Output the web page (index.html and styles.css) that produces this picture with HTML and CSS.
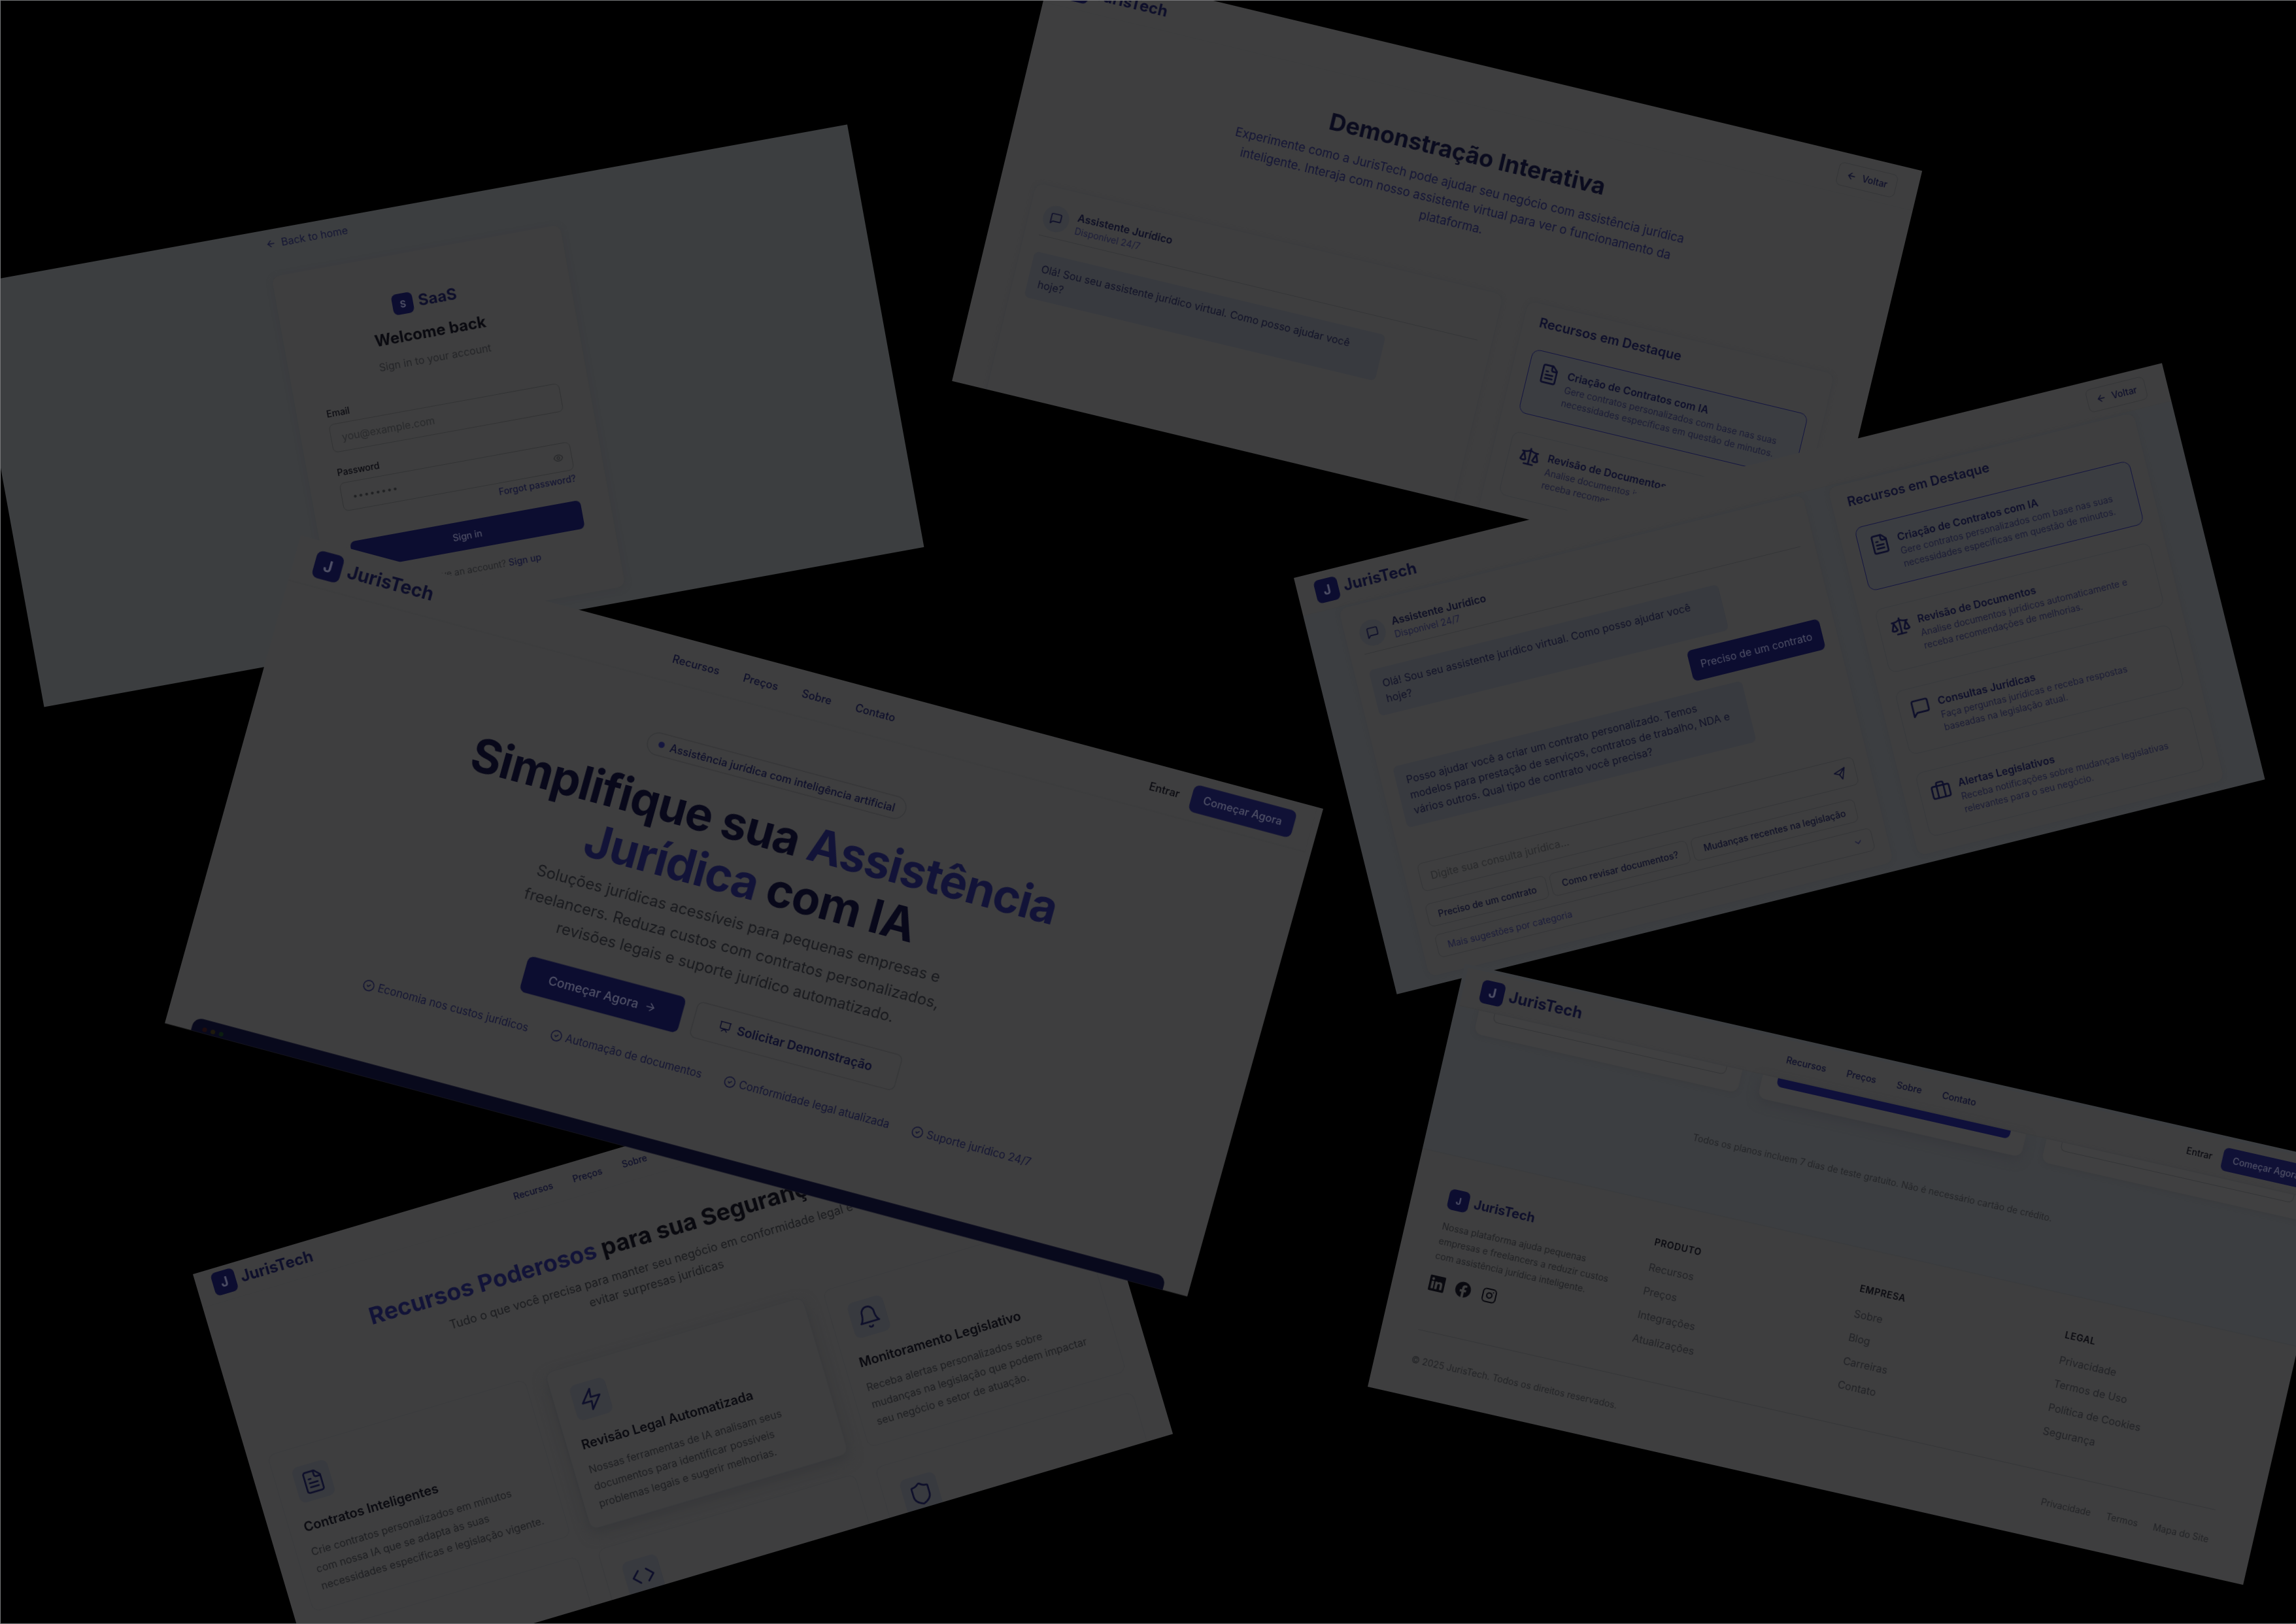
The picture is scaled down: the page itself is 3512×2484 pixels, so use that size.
FILE: index.html
```html
<!DOCTYPE html>
<html lang="pt-BR">
<head>
<meta charset="utf-8">
<title>JurisTech</title>
<link rel="stylesheet" href="styles.css">
</head>
<body>
<svg class="sprite" aria-hidden="true">
  <symbol id="file" viewBox="0 0 24 24"><path d="M15 2H6a2 2 0 0 0-2 2v16a2 2 0 0 0 2 2h12a2 2 0 0 0 2-2V7Z"/><path d="M14 2v4a2 2 0 0 0 2 2h4"/><path d="M10 9H8"/><path d="M16 13H8"/><path d="M16 17H8"/></symbol>
  <symbol id="scale" viewBox="0 0 24 24"><path d="m16 16 3-8 3 8c-.87.65-1.92 1-3 1s-2.13-.35-3-1Z"/><path d="m2 16 3-8 3 8c-.87.65-1.92 1-3 1s-2.13-.35-3-1Z"/><path d="M7 21h10"/><path d="M12 3v18"/><path d="M3 7h2c2 0 5-1 7-2 2 1 5 2 7 2h2"/></symbol>
  <symbol id="msg" viewBox="0 0 24 24"><path d="M21 15a2 2 0 0 1-2 2H7l-4 4V5a2 2 0 0 1 2-2h14a2 2 0 0 1 2 2z"/></symbol>
  <symbol id="case" viewBox="0 0 24 24"><rect x="2" y="7" width="20" height="14" rx="2"/><path d="M16 21V5a2 2 0 0 0-2-2h-4a2 2 0 0 0-2 2v16"/></symbol>
  <symbol id="zap" viewBox="0 0 24 24"><path d="M13 2 3 14h9l-1 8 10-12h-9l1-8z"/></symbol>
  <symbol id="bell" viewBox="0 0 24 24"><path d="M6 8a6 6 0 0 1 12 0c0 7 3 9 3 9H3s3-2 3-9"/><path d="M10.3 21a1.94 1.94 0 0 0 3.4 0"/></symbol>
  <symbol id="shield" viewBox="0 0 24 24"><path d="M20 13c0 5-3.5 7.5-7.66 8.95a1 1 0 0 1-.67-.01C7.5 20.5 4 18 4 13V6a1 1 0 0 1 1-1c2 0 4.5-1.2 6.24-2.72a1.17 1.17 0 0 1 1.52 0C14.51 3.81 17 5 19 5a1 1 0 0 1 1 1z"/></symbol>
  <symbol id="code" viewBox="0 0 24 24"><path d="m16 18 6-6-6-6"/><path d="m8 6-6 6 6 6"/></symbol>
  <symbol id="send" viewBox="0 0 24 24"><path d="m22 2-7 20-4-9-9-4Z"/><path d="M22 2 11 13"/></symbol>
  <symbol id="left" viewBox="0 0 24 24"><path d="m12 19-7-7 7-7"/><path d="M19 12H5"/></symbol>
  <symbol id="right" viewBox="0 0 24 24"><path d="M5 12h14"/><path d="m12 5 7 7-7 7"/></symbol>
  <symbol id="check" viewBox="0 0 24 24"><circle cx="12" cy="12" r="10"/><path d="m9 12 2 2 4-4"/></symbol>
  <symbol id="eye" viewBox="0 0 24 24"><path d="M2 12s3-7 10-7 10 7 10 7-3 7-10 7-10-7-10-7Z"/><circle cx="12" cy="12" r="3"/></symbol>
  <symbol id="screen" viewBox="0 0 24 24"><path d="M2 3h20"/><path d="M21 3v11a2 2 0 0 1-2 2H5a2 2 0 0 1-2-2V3"/><path d="m7 21 5-5 5 5"/></symbol>
  <symbol id="chev" viewBox="0 0 24 24"><path d="m6 9 6 6 6-6"/></symbol>
  <symbol id="linkedin" viewBox="0 0 24 24"><path class="solid" d="M20.447 20.452h-3.554v-5.569c0-1.328-.027-3.037-1.852-3.037-1.853 0-2.136 1.445-2.136 2.939v5.667H9.351V9h3.414v1.561h.046c.477-.9 1.637-1.85 3.37-1.85 3.601 0 4.267 2.37 4.267 5.455v6.286zM5.337 7.433c-1.144 0-2.063-.926-2.063-2.065 0-1.138.92-2.063 2.063-2.063 1.14 0 2.064.925 2.064 2.063 0 1.139-.925 2.065-2.064 2.065zm1.782 13.019H3.555V9h3.564v11.452zM22.225 0H1.771C.792 0 0 .774 0 1.729v20.542C0 23.227.792 24 1.771 24h20.451C23.2 24 24 23.227 24 22.271V1.729C24 .774 23.2 0 22.222 0h.003z"/></symbol>
  <symbol id="facebook" viewBox="0 0 24 24"><path class="solid" d="M24 12.073c0-6.627-5.373-12-12-12s-12 5.373-12 12c0 5.99 4.388 10.954 10.125 11.854v-8.385H7.078v-3.47h3.047V9.43c0-3.007 1.792-4.669 4.533-4.669 1.312 0 2.686.235 2.686.235v2.953H15.83c-1.491 0-1.956.925-1.956 1.874v2.25h3.328l-.532 3.47h-2.796v8.385C19.612 23.027 24 18.062 24 12.073z"/></symbol>
  <symbol id="insta" viewBox="0 0 24 24"><rect x="2" y="2" width="20" height="20" rx="5"/><path d="M16 11.37A4 4 0 1 1 12.63 8 4 4 0 0 1 16 11.37z"/><path d="M17.5 6.5h.01"/></symbol>
</svg>

<main class="stage">

  <section class="win win-login">
    <div class="login-col">
      <a class="back-link"><svg class="i i16"><use href="#left"/></svg>Back to home</a>
      <div class="login-card">
        <div class="login-brand"><span class="logo-box box32 small-j">S</span><span class="login-name">SaaS</span></div>
        <h2 class="login-title">Welcome back</h2>
        <p class="login-sub">Sign in to your account</p>
        <label class="field-label first">Email</label>
        <div class="input"><span class="placeholder">you@example.com</span></div>
        <label class="field-label">Password</label>
        <div class="input"><span class="dots">••••••••</span><svg class="i i16 eye"><use href="#eye"/></svg></div>
        <a class="forgot">Forgot password?</a>
        <button class="signin">Sign in</button>
        <p class="signup">Don't have an account? <a>Sign up</a></p>
      </div>
    </div>
  </section>

  <section class="win win-features">
    <div class="inner">
      <header class="hdr hdr-short">
        <div class="logo"><span class="logo-box">J</span><span class="logo-name">JurisTech</span></div>
        <nav class="nav"><a>Recursos</a><a>Preços</a><a>Sobre</a><a>Contato</a></nav>
      </header>
      <h2 class="sec-title"><span class="accent">Recursos Poderosos</span> para sua Segurança Jurídica</h2>
      <p class="sec-sub">Tudo o que você precisa para manter seu negócio em conformidade legal e evitar surpresas jurídicas</p>
      <div class="feat-grid">
        <article class="feat"><span class="feat-icon"><svg class="i"><use href="#file"/></svg></span><h3>Contratos Inteligentes</h3><p>Crie contratos personalizados em minutos<br>com nossa IA que se adapta às suas<br>necessidades específicas e legislação vigente.</p></article>
        <article class="feat feat-hot"><span class="feat-icon"><svg class="i"><use href="#zap"/></svg></span><h3>Revisão Legal Automatizada</h3><p>Nossas ferramentas de IA analisam seus<br>documentos para identificar possíveis<br>problemas legais e sugerir melhorias.</p></article>
        <article class="feat"><span class="feat-icon"><svg class="i"><use href="#bell"/></svg></span><h3>Monitoramento Legislativo</h3><p>Receba alertas personalizados sobre<br>mudanças na legislação que podem impactar<br>seu negócio e setor de atuação.</p></article>
        <article class="feat"></article>
        <article class="feat"><span class="feat-icon"><svg class="i"><use href="#code"/></svg></span></article>
        <article class="feat"><span class="feat-icon"><svg class="i"><use href="#shield"/></svg></span></article>
      </div>
    </div>
  </section>

  <section class="win win-hero">
    <div class="inner">
      <header class="hdr">
        <div class="logo"><span class="logo-box">J</span><span class="logo-name">JurisTech</span></div>
        <nav class="nav"><a>Recursos</a><a>Preços</a><a>Sobre</a><a>Contato</a></nav>
        <div class="hdr-actions"><a class="enter">Entrar</a><button class="cta">Começar Agora</button></div>
      </header>
      <div class="hero">
        <span class="pill"><span class="pill-dot"></span>Assistência jurídica com inteligência artificial</span>
        <h1 class="hero-title">Simplifique sua <span class="accent">Assistência<br>Jurídica</span> com IA</h1>
        <p class="hero-sub">Soluções jurídicas acessíveis para pequenas empresas e freelancers. Reduza custos com contratos personalizados, revisões legais e suporte jurídico automatizado.</p>
        <div class="hero-btns">
          <button class="btn-main">Começar Agora<svg class="i i16"><use href="#right"/></svg></button>
          <button class="btn-ghost"><svg class="i i16"><use href="#screen"/></svg>Solicitar Demonstração</button>
        </div>
        <ul class="perks">
          <li><svg class="i i16"><use href="#check"/></svg>Economia nos custos jurídicos</li>
          <li><svg class="i i16"><use href="#check"/></svg>Automação de documentos</li>
          <li><svg class="i i16"><use href="#check"/></svg>Conformidade legal atualizada</li>
          <li><svg class="i i16"><use href="#check"/></svg>Suporte jurídico 24/7</li>
        </ul>
        <div class="preview"><span class="dot dot-r"></span><span class="dot dot-y"></span><span class="dot dot-g"></span></div>
      </div>
    </div>
  </section>

  <section class="win win-demo">
    <div class="inner">
      <header class="hdr hdr-split">
        <div class="logo"><span class="logo-box">J</span><span class="logo-name">JurisTech</span></div>
        <button class="voltar"><svg class="i i16"><use href="#left"/></svg>Voltar</button>
      </header>
      <h1 class="demo-title">Demonstração Interativa</h1>
      <p class="demo-sub">Experimente como a JurisTech pode ajudar seu negócio com assistência jurídica inteligente. Interaja com nosso assistente virtual para ver o funcionamento da plataforma.</p>
      <div class="demo-grid">
        <div class="chat">
          <div class="chat-head"><span class="chat-avatar"><svg class="i i20"><use href="#msg"/></svg></span><div><strong>Assistente Jurídico</strong><small>Disponível 24/7</small></div></div>
          <div class="msgs"><p class="bubble">Olá! Sou seu assistente jurídico virtual. Como posso ajudar você hoje?</p></div>
        </div>
        <aside class="panel">
          <h2>Recursos em Destaque</h2>
          <div class="res res-on"><svg class="i i32"><use href="#file"/></svg><div><h3>Criação de Contratos com IA</h3><p>Gere contratos personalizados com base nas suas necessidades específicas em questão de minutos.</p></div></div>
          <div class="res"><svg class="i i32"><use href="#scale"/></svg><div><h3>Revisão de Documentos</h3><p>Analise documentos jurídicos automaticamente e receba recomendações de melhorias.</p></div></div>
        </aside>
      </div>
    </div>
  </section>

  <section class="win win-chat">
    <header class="hdr hdr-split">
      <div class="logo"><span class="logo-box">J</span><span class="logo-name">JurisTech</span></div>
      <button class="voltar"><svg class="i i16"><use href="#left"/></svg>Voltar</button>
    </header>
    <div class="demo-grid">
      <div class="chat">
        <div class="chat-head"><span class="chat-avatar"><svg class="i i20"><use href="#msg"/></svg></span><div><strong>Assistente Jurídico</strong><small>Disponível 24/7</small></div></div>
        <div class="msgs">
          <p class="bubble">Olá! Sou seu assistente jurídico virtual. Como posso ajudar você hoje?</p>
          <p class="bubble bubble-me">Preciso de um contrato</p>
          <p class="bubble">Posso ajudar você a criar um contrato personalizado. Temos modelos para prestação de serviços, contratos de trabalho, NDA e vários outros. Qual tipo de contrato você precisa?</p>
        </div>
        <div class="ask"><span class="placeholder">Digite sua consulta jurídica...</span><svg class="i i20"><use href="#send"/></svg></div>
        <div class="chips"><span>Preciso de um contrato</span><span>Como revisar documentos?</span><span>Mudanças recentes na legislação</span></div>
        <div class="more"><span>Mais sugestões por categoria</span><svg class="i i16"><use href="#chev"/></svg></div>
      </div>
      <aside class="panel">
        <h2>Recursos em Destaque</h2>
        <div class="res res-on"><svg class="i i32"><use href="#file"/></svg><div><h3>Criação de Contratos com IA</h3><p>Gere contratos personalizados com base nas suas necessidades específicas em questão de minutos.</p></div></div>
        <div class="res"><svg class="i i32"><use href="#scale"/></svg><div><h3>Revisão de Documentos</h3><p>Analise documentos jurídicos automaticamente e receba recomendações de melhorias.</p></div></div>
        <div class="res"><svg class="i i32"><use href="#msg"/></svg><div><h3>Consultas Jurídicas</h3><p>Faça perguntas jurídicas e receba respostas baseadas na legislação atual.</p></div></div>
        <div class="res"><svg class="i i32"><use href="#case"/></svg><div><h3>Alertas Legislativos</h3><p>Receba notificações sobre mudanças legislativas relevantes para o seu negócio.</p></div></div>
      </aside>
    </div>
  </section>

  <section class="win win-price">
    <div class="inner">
      <header class="hdr">
        <div class="logo"><span class="logo-box">J</span><span class="logo-name">JurisTech</span></div>
        <nav class="nav"><a>Recursos</a><a>Preços</a><a>Sobre</a><a>Contato</a></nav>
        <div class="hdr-actions"><a class="enter">Entrar</a><button class="cta">Começar Agora</button></div>
      </header>
      <div class="plans">
        <div class="plan"><span class="plan-btn"></span></div>
        <div class="plan plan-hot"><span class="plan-btn plan-btn-on"></span></div>
        <div class="plan"><span class="plan-btn"></span></div>
      </div>
      <p class="trial">Todos os planos incluem 7 dias de teste gratuito. Não é necessário cartão de crédito.</p>
      <footer class="foot">
        <div class="foot-grid">
          <div class="foot-about">
            <div class="logo"><span class="logo-box box32 small-j">J</span><span class="logo-name foot-name">JurisTech</span></div>
            <p>Nossa plataforma ajuda pequenas empresas e freelancers a reduzir custos com assistência jurídica inteligente.</p>
            <div class="social"><svg class="i i24"><use href="#linkedin"/></svg><svg class="i i24"><use href="#facebook"/></svg><svg class="i i24"><use href="#insta"/></svg></div>
          </div>
          <div class="foot-col"><h4>Produto</h4><a>Recursos</a><a>Preços</a><a>Integrações</a><a>Atualizações</a></div>
          <div class="foot-col"><h4>Empresa</h4><a>Sobre</a><a>Blog</a><a>Carreiras</a><a>Contato</a></div>
          <div class="foot-col"><h4>Legal</h4><a>Privacidade</a><a>Termos de Uso</a><a>Política de Cookies</a><a>Segurança</a></div>
        </div>
        <div class="foot-bottom"><span>© 2025 JurisTech. Todos os direitos reservados.</span><div class="foot-links"><a>Privacidade</a><a>Termos</a><a>Mapa do Site</a></div></div>
      </footer>
    </div>
  </section>

</main>
</body>
</html>
```

FILE: styles.css
```css
:root {
  --sheet: #3e3e3f;
  --page: #3c3e41;
  --ink: #09090f;
  --navy: #0c0d30;
  --navy-text: #0d0e2a;
  --navy-soft: #131433;
  --accent: #121338;
  --muted: #1a1b1e;
  --line: #343537;
  --tint: #383a3f;
  --on-navy: #4f5066;
}
* { box-sizing: border-box; }
html, body { margin: 0; padding: 0; background: #000; }
body { width: 3512px; height: 2484px; overflow: hidden; font-family: Inter, "Liberation Sans", sans-serif; color: var(--muted); }
h1, h2, h3, h4, p, ul { margin: 0; padding: 0; }
button { font: inherit; border: 0; background: none; color: inherit; padding: 0; }
a { color: inherit; }
.sprite { display: none; }
.stage { position: relative; width: 3512px; height: 2484px; overflow: hidden; background: #000; border-top: 1px solid #77787a; border-left: 1px solid #77787a; border-bottom: 1px solid #77787a; }

.i { display: block; flex: none; fill: none; stroke: currentColor; stroke-width: 2; stroke-linecap: round; stroke-linejoin: round; }
.solid { fill: currentColor; stroke: none; }
.i16 { width: 16px; height: 16px; }
.i20 { width: 20px; height: 20px; }
.i24 { width: 24px; height: 24px; }
.i32 { width: 32px; height: 32px; }

/* windows scattered on the canvas */
.win { position: absolute; overflow: hidden; transform-origin: 0 0; background: var(--sheet); filter: blur(.45px); }
.win-login { left: -51px; top: 434px; width: 1368px; height: 657px; transform: rotate(-10.3deg); background: #3c3e40; }
.win-features { left: 294px; top: 1948px; width: 1368px; height: 660px; transform: rotate(-16.5deg); }
.win-hero { left: 459px; top: 818px; width: 1368px; height: 654px; transform: matrix(1.1433, .3056, -.318, 1.1407, 0, 0); }
.win-demo { left: 1609px; top: -59px; width: 1368px; height: 659px; transform: rotate(13.5deg); }
.win-chat { left: 1978px; top: 883px; width: 1368px; height: 656px; transform: rotate(-13.9deg); background: var(--page); }
.win-price { left: 2240px; top: 1473px; width: 1373px; height: 664px; transform: matrix(.9752, .2207, -.2244, .9744, 0, 0); background: var(--page); }

.win-hero .inner { width: 1360px; }
.win-features .inner { margin: -3px 0 0 -2px; width: 1356px; }
.win-demo .inner { padding: 3px 0 0 3px; }
.win-price .inner { padding: 5px 0 0 6px; width: 1356px; }

/* header */
.hdr { display: grid; grid-template-columns: 479px auto 1fr; align-items: center; height: 60px; padding: 0 23px 0 27px; background: var(--sheet); border-bottom: 1px solid #3c3d3e; }
.hdr-short { height: 57px; }
.hdr-split { grid-template-columns: 1fr auto; padding-right: 33px; }
.logo { display: flex; align-items: center; gap: 8px; }
.logo-box { width: 36px; height: 36px; display: flex; align-items: center; justify-content: center; border-radius: 8px; background: var(--navy); color: var(--on-navy); font-weight: 700; font-size: 20px; flex: none; }
.box32 { width: 32px; height: 32px; }
.small-j { font-size: 14px; }
.logo-name { font-size: 24px; line-height: 32px; font-weight: 700; color: var(--navy-text); }
.nav { display: flex; gap: 32px; font-size: 14px; font-weight: 500; color: var(--navy-text); }
.hdr-actions { display: flex; align-items: center; justify-content: flex-end; gap: 16px; font-size: 14px; }
.enter { font-weight: 500; color: var(--ink); }
.cta { height: 36px; padding: 0 16px; border-radius: 8px; background: #101136; color: var(--on-navy); font-size: 14px; font-weight: 500; }
.voltar { display: flex; align-items: center; gap: 8px; height: 36px; padding: 0 13px; border: 1px solid var(--line); border-radius: 8px; font-size: 14px; font-weight: 500; color: var(--navy-text); }

/* login */
.login-col { width: 448px; margin: 0 auto; padding-top: 12px; }
.back-link { display: flex; align-items: center; gap: 8px; height: 20px; margin-bottom: 40px; font-size: 16px; color: var(--navy-soft); }
.login-card { height: 562px; padding: 60px 45px 0; background: var(--sheet); border-radius: 12px; box-shadow: 0 2px 10px #3a3b3d; display: flex; flex-direction: column; }
.login-brand { display: flex; align-items: center; justify-content: center; gap: 8px; }
.login-name { font-size: 24px; font-weight: 700; color: var(--navy-text); line-height: 32px; }
.login-title { margin-top: 18px; text-align: center; font-size: 24px; line-height: 32px; font-weight: 700; color: var(--ink); }
.login-sub { margin-top: 14px; text-align: center; font-size: 16px; line-height: 20px; color: #232427; }
.field-label { display: block; margin-top: 21px; font-size: 14px; line-height: 20px; font-weight: 500; color: var(--ink); }
.field-label.first { margin-top: 36px; }
.input { display: flex; align-items: center; justify-content: space-between; height: 44px; margin-top: 6px; padding: 0 12px 0 16px; border: 1px solid #323334; border-radius: 8px; }
.placeholder { font-size: 16px; color: #28292b; }
.dots { font-size: 14px; letter-spacing: 1px; color: #1f2022; }
.eye { color: #27282a; }
.forgot { align-self: flex-end; margin-top: 3px; font-size: 14px; line-height: 20px; font-weight: 500; color: var(--navy-soft); }
.signin { height: 44px; margin-top: 24px; border-radius: 8px; background: var(--navy); color: var(--on-navy); font-size: 14px; font-weight: 500; }
.signup { margin-top: 21px; text-align: center; font-size: 14px; line-height: 20px; color: #222326; }
.signup a { color: var(--navy-soft); font-weight: 500; }

/* hero */
.hero { display: flex; flex-direction: column; align-items: center; }
.pill { display: flex; align-items: center; gap: 8px; height: 30px; margin: 66px 8px 0 0; padding: 0 14px; border: 1px solid var(--line); border-radius: 15px; font-size: 14px; font-weight: 500; color: var(--navy-text); }
.pill-dot { width: 8px; height: 8px; border-radius: 50%; background: #15163f; }
.hero-title { margin-top: 24px; text-align: center; font-size: 60px; line-height: 69px; font-weight: 700; letter-spacing: -1px; color: #08081a; }
.accent { color: var(--accent); }
.hero-sub { width: 600px; margin-top: 4px; text-align: center; font-size: 20px; line-height: 32.5px; color: #191a1e; }
.hero-btns { display: flex; gap: 16px; margin-top: 28px; }
.btn-main { display: flex; align-items: center; justify-content: center; gap: 8px; width: 211px; height: 48px; border-radius: 8px; background: var(--navy); color: var(--on-navy); font-size: 16px; font-weight: 500; }
.btn-ghost { display: flex; align-items: center; justify-content: center; gap: 8px; width: 274px; height: 48px; border: 1px solid var(--line); border-radius: 8px; font-size: 16px; font-weight: 600; color: var(--navy-text); }
.perks { display: flex; gap: 30px; margin-top: 33px; list-style: none; font-size: 14px; line-height: 20px; color: var(--navy-soft); }
.perks li { display: flex; align-items: center; gap: 4px; }
.preview { align-self: stretch; height: 40px; margin: 87px 25px 0 35px; padding: 10px 14px; display: flex; gap: 5px; background: #08091c; border-radius: 12px 12px 0 0; }
.dot { width: 6px; height: 6px; border-radius: 50%; }
.dot-r { background: #1e0c0e; }
.dot-y { background: #1e1a0c; }
.dot-g { background: #0b1e10; }

/* features */
.sec-title { margin-top: 65px; text-align: center; font-size: 36px; line-height: 40px; font-weight: 700; color: var(--ink); white-space: nowrap; }
.sec-sub { width: 680px; margin: 14px auto 0; text-align: center; font-size: 18px; line-height: 28px; color: var(--muted); }
.feat-grid { display: grid; grid-template-columns: repeat(3, 411px); column-gap: 32px; row-gap: 32px; margin: 69px 0 0 32px; }
.feat { height: 250px; padding: 29px 16px 0 22px; border: 1px solid #3a3b3d; border-radius: 12px; background: var(--sheet); }
.feat-hot { box-shadow: 0 8px 20px #37383a; }
.feat-icon { display: flex; align-items: center; justify-content: center; width: 56px; height: 56px; margin-left: 6px; border-radius: 10px; background: var(--tint); color: var(--navy-text); }
.feat-icon .i { width: 38px; height: 38px; stroke-width: 1.7; }
.feat h3 { margin-top: 22px; font-size: 20px; line-height: 28px; font-weight: 600; color: var(--ink); }
.feat p { margin-top: 12px; font-size: 16px; line-height: 27px; color: #1d1e21; }

/* demo */
.demo-title { margin-top: 54px; text-align: center; font-size: 36px; line-height: 40px; font-weight: 700; color: #0a0b1e; }
.demo-sub { width: 745px; margin: 15px auto 0; text-align: center; font-size: 18.5px; line-height: 29px; color: #131436; }
.win-demo .demo-grid { margin: 75px 0 0 55px; }
.win-demo .chat { margin-left: -3px; }
.demo-grid { display: grid; grid-template-columns: 731px 481px; gap: 40px; margin: 3px 0 0 55px; }
.chat { height: 579px; padding: 17px 22px 0; background: var(--sheet); border-radius: 12px; box-shadow: 0 0 6px #3a3c3f; }
.chat-head { display: flex; align-items: center; gap: 12px; height: 60px; border-bottom: 1px solid #343537; margin-bottom: 25px; }
.chat-avatar { display: flex; align-items: center; justify-content: center; width: 40px; height: 40px; border-radius: 50%; background: var(--tint); color: var(--navy-text); flex: none; }
.chat-head strong { display: block; font-size: 16px; line-height: 22px; font-weight: 600; color: #0d0e24; }
.chat-head small { display: block; font-size: 14px; line-height: 20px; color: #1b1c3a; }
.msgs { display: flex; flex-direction: column; gap: 16px; height: 305px; }
.bubble { align-self: flex-start; max-width: 80%; padding: 12px 16px; border-radius: 8px; background: var(--tint); font-size: 16px; line-height: 24px; color: #101127; }
.bubble-me { align-self: flex-end; background: var(--navy); color: var(--on-navy); }
.ask { display: flex; align-items: center; justify-content: space-between; height: 44px; padding: 0 14px 0 16px; border: 1px solid #343537; border-radius: 8px; color: var(--navy-text); }
.chips { display: flex; gap: 6px; margin: 19px 0 0 -3px; font-size: 14px; font-weight: 500; color: #0e0f26; }
.chips span { display: flex; align-items: center; height: 36px; padding: 0 16px; border: 1px solid var(--line); border-radius: 8px; }
.more { display: flex; align-items: center; justify-content: space-between; height: 36px; margin-top: 13px; padding: 0 14px 0 16px; border: 1px solid var(--line); border-radius: 8px; font-size: 14px; color: #1a1b3a; }
.panel { height: 579px; padding: 14px 24px 0; background: var(--sheet); border-radius: 12px; box-shadow: 0 0 6px #3a3c3f; }
.panel h2 { font-size: 20px; line-height: 28px; font-weight: 600; color: #0d0e2a; margin-bottom: 27px; }
.res { display: flex; align-items: flex-start; gap: 12px; height: 100px; margin-bottom: 29px; padding: 16px; border: 1px solid #37393c; border-radius: 12px; color: var(--navy-text); }
.res-on { border-color: #131440; background: #3b3d41; }
.res h3 { font-size: 16px; line-height: 24px; font-weight: 600; color: #0d0e2a; }
.res p { font-size: 14px; line-height: 20px; color: #1a1b35; }

/* pricing + footer */
.plans { display: grid; grid-template-columns: repeat(3, 413px); column-gap: 32px; margin-left: 31px; }
.plan { display: flex; height: 36px; padding: 0 24px; background: #404041; border-radius: 0 0 12px 12px; box-shadow: 0 2px 6px #3a3b3e; }
.plan-hot { box-shadow: 0 6px 16px #38393d; }
.plan-btn { flex: 1; height: 13px; border: 1px solid #333436; border-top: 0; border-radius: 0 0 8px 8px; }
.plan-btn-on { background: #0f103b; border: 0; }
.trial { margin-top: 71px; text-align: center; font-size: 14px; line-height: 20px; color: #232427; }
.foot { margin: 98px -20px 0 -6px; padding: 49px 70px 0 56px; height: 400px; background: var(--sheet); border-top: 1px solid #3c3d3e; }
.foot-grid { display: grid; grid-template-columns: repeat(4, 290px); column-gap: 32px; }
.foot-name { font-size: 20px; }
.foot-about p { max-width: 275px; margin-top: 15px; font-size: 14px; line-height: 23px; color: #1f2023; }
.social { display: flex; gap: 17px; margin-top: 19px; color: var(--ink); }
.foot-col { display: flex; flex-direction: column; gap: 13px; padding-top: 1px; font-size: 16px; line-height: 24px; color: #212226; }
.foot-col h4 { margin-bottom: 4px; font-size: 14px; line-height: 20px; font-weight: 600; letter-spacing: .7px; text-transform: uppercase; color: var(--ink); }
.foot-bottom { display: flex; justify-content: space-between; align-items: center; margin-top: 48px; padding-top: 36px; border-top: 1px solid #353638; font-size: 14px; line-height: 20px; color: #222326; }
.foot-links { display: flex; gap: 24px; }
```
